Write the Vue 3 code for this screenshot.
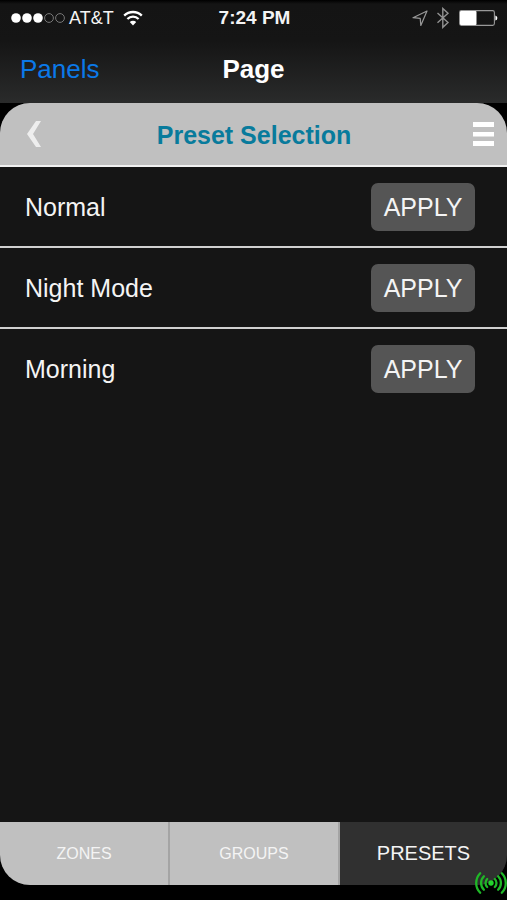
<script setup>
import { ref } from 'vue'

const presets = ['Normal', 'Night Mode', 'Morning']
const tabs = ['ZONES', 'GROUPS', 'PRESETS']
const activeTab = ref('PRESETS')
</script>

<template>
  <div class="screen">
    <header class="top">
      <div class="status">
        <div class="side">
          <svg class="signal" viewBox="0 0 54 12" aria-hidden="true">
            <g fill="#fff">
              <circle cx="5" cy="6" r="4.8" />
              <circle cx="16" cy="6" r="4.8" />
              <circle cx="27" cy="6" r="4.8" />
            </g>
            <g fill="none" stroke="#777" stroke-width="1">
              <circle cx="38" cy="6" r="4.4" />
              <circle cx="49" cy="6" r="4.4" />
            </g>
          </svg>
          <span class="carrier">AT&amp;T</span>
          <svg class="wifi" viewBox="0 0 20 16" aria-hidden="true">
            <g fill="none" stroke="#fff" stroke-width="2.3">
              <path d="M1.2 5.6a12.5 12.5 0 0 1 17.6 0" />
              <path d="M4.4 9a8 8 0 0 1 11.2 0" />
            </g>
            <path d="M10 15.4 6.8 12a4.6 4.6 0 0 1 6.4 0z" fill="#fff" />
          </svg>
        </div>
        <span class="time">7:24 PM</span>
        <div class="side right">
          <svg class="location" viewBox="0 0 16 16" aria-hidden="true">
            <path d="M15 1 1 7.7l7.2.6.6 7.2z" fill="none" stroke="#999" stroke-width="1.2" stroke-linejoin="round" />
          </svg>
          <svg class="bluetooth" viewBox="0 0 14 22" aria-hidden="true">
            <path d="M1.5 6 12 15.5l-5.2 4.8V1.5L12 6.3 1.5 15.8" fill="none" stroke="#929292" stroke-width="1.4" />
          </svg>
          <svg class="battery" viewBox="0 0 39 16" aria-hidden="true">
            <rect x=".6" y=".6" width="34.8" height="14.8" rx="1.8" fill="none" stroke="#999" stroke-width="1.1" />
            <rect x="1" y="1" width="16.5" height="14" rx="1" fill="#fff" />
            <path d="M36.4 5.4a2.7 2.7 0 0 1 0 5.2z" fill="#fff" />
          </svg>
        </div>
      </div>
      <nav class="nav">
        <a class="back" href="#panels">Panels</a>
        <h1>Page</h1>
      </nav>
    </header>

    <main class="panel">
      <div class="panel-head">
        <button class="icon-button" type="button" aria-label="Back">
          <svg class="chevron" viewBox="0 0 16 26" aria-hidden="true">
            <path d="M10 0h5L7 13l8 13h-5L1 13z" fill="#eee" />
          </svg>
        </button>
        <h2>Preset Selection</h2>
        <button class="icon-button end" type="button" aria-label="Menu">
          <svg class="menu" viewBox="0 0 22 24" aria-hidden="true">
            <path d="M1 0h21v5H1zM1 10h21v4.5H1zM1 19h21v5H1z" fill="#fff" />
          </svg>
        </button>
      </div>
      <ul class="list">
        <li v-for="preset in presets" :key="preset">
          <span class="name">{{ preset }}</span>
          <button class="apply" type="button">APPLY</button>
        </li>
      </ul>
      <nav class="tabs">
        <button
          v-for="tab in tabs"
          :key="tab"
          type="button"
          :class="{ active: tab === activeTab }"
          @click="activeTab = tab"
        >{{ tab }}</button>
      </nav>
    </main>

    <svg class="beacon" viewBox="0 0 32 24" aria-hidden="true">
      <circle cx="16" cy="12" r="2.7" fill="#22d52b" />
      <g fill="none" stroke="#1fb827" stroke-width="2.3" stroke-linecap="round">
        <path d="M12.2 8a5.6 5.6 0 0 0 0 8M8.9 5.2a9.6 9.6 0 0 0 0 13.6M5.2 2.2a14 14 0 0 0 0 19.6" />
        <path d="M19.8 8a5.6 5.6 0 0 1 0 8M23.1 5.2a9.6 9.6 0 0 1 0 13.6M26.8 2.2a14 14 0 0 1 0 19.6" />
      </g>
    </svg>
  </div>
</template>

<style>
body {
  background: #000;
}
</style>

<style scoped>
.screen {
  position: relative;
  display: flex;
  flex-direction: column;
  box-sizing: border-box;
  min-height: 100vh;
  padding-bottom: 15px;
  background: #000;
  color: #f4f4f4;
  font-family: "Liberation Sans", Arial, sans-serif;
}
button {
  margin: 0;
  padding: 0;
  border: 0;
  background: none;
  color: inherit;
  font-family: inherit;
}
svg {
  display: block;
}
h1,
h2 {
  margin: 0;
}
.top {
  background: linear-gradient(#000 0, #141414 4px, #151515 40%, #2a2b2b);
}
.status {
  display: grid;
  grid-template-columns: 1fr auto 1fr;
  align-items: center;
  height: 36px;
  padding: 0 9px 0 11px;
}
.side {
  display: flex;
  align-items: center;
}
.right {
  justify-content: flex-end;
}
.signal {
  width: 54px;
  height: 12px;
}
.carrier {
  margin: 0 9px 0 4px;
  font-size: 18px;
}
.wifi {
  width: 20px;
  height: 16px;
}
.time {
  font-size: 19px;
  font-weight: bold;
}
.location {
  width: 16px;
  height: 16px;
}
.bluetooth {
  width: 14px;
  height: 22px;
  margin: 0 9px 0 8px;
}
.battery {
  width: 39px;
  height: 16px;
}
.nav {
  display: grid;
  grid-template-columns: 1fr auto 1fr;
  align-items: center;
  height: 67px;
  padding: 0 20px;
}
.back {
  color: #0b79e8;
  font-size: 26px;
  text-decoration: none;
}
h1 {
  color: #fff;
  font-size: 26px;
}
.panel {
  flex: 1;
  display: flex;
  flex-direction: column;
  overflow: hidden;
  border-radius: 30px;
  background: #151515;
}
.panel-head {
  display: grid;
  grid-template-columns: 1fr auto 1fr;
  align-items: center;
  height: 62px;
  padding: 0 13px 0 26px;
  border-bottom: 2px solid #f0f0f0;
  background: #c0c0c0;
}
.icon-button {
  justify-self: start;
}
.end {
  justify-self: end;
}
.chevron {
  width: 16px;
  height: 26px;
}
.menu {
  width: 22px;
  height: 24px;
}
h2 {
  margin-right: 12px;
  padding-top: 2px;
  color: #087b9c;
  font-size: 25px;
}
.list {
  flex: 1;
  margin: 0;
  padding: 0;
  list-style: none;
}
li {
  display: flex;
  align-items: center;
  justify-content: space-between;
  height: 79px;
  padding: 0 32px 0 25px;
  font-size: 25px;
}
li + li {
  border-top: 2px solid #d0d0d0;
}
.name,
.apply {
  padding-top: 2px;
}
.apply {
  width: 104px;
  height: 48px;
  border-radius: 7px;
  background: #555;
  font-size: 25px;
}
.tabs {
  display: grid;
  grid-template-columns: 170fr 170fr 167fr;
  height: 63px;
}
.tabs button {
  border-right: 2px solid #a4a4a4;
  background: #c0c0c0;
  font-size: 16px;
}
.tabs button:last-child {
  border-right: 0;
}
.tabs .active {
  background: #303030;
  font-size: 20px;
}
.beacon {
  position: absolute;
  right: 0;
  bottom: 5px;
  width: 32px;
  height: 24px;
}
</style>
